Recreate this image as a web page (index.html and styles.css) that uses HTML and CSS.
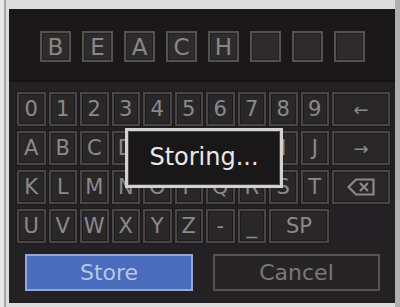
FILE: index.html
```html
<!DOCTYPE html>
<html>
<head>
<meta charset="utf-8">
<link rel="stylesheet" href="styles.css">
</head>
<body>
<div class="frame">
  <div class="panel">
    <div class="name-area">
      <div class="slot">B</div>
      <div class="slot">E</div>
      <div class="slot">A</div>
      <div class="slot">C</div>
      <div class="slot">H</div>
      <div class="slot"></div>
      <div class="slot"></div>
      <div class="slot"></div>
    </div>
    <div class="kb-area">
      <div class="keys">
        <div class="key">0</div><div class="key">1</div><div class="key">2</div><div class="key">3</div><div class="key">4</div><div class="key">5</div><div class="key">6</div><div class="key">7</div><div class="key">8</div><div class="key">9</div><div class="key sym">←</div>
        <div class="key">A</div><div class="key">B</div><div class="key">C</div><div class="key">D</div><div class="key">E</div><div class="key">F</div><div class="key">G</div><div class="key">H</div><div class="key">I</div><div class="key">J</div><div class="key sym">→</div>
        <div class="key">K</div><div class="key">L</div><div class="key">M</div><div class="key">N</div><div class="key">O</div><div class="key">P</div><div class="key">Q</div><div class="key">R</div><div class="key">S</div><div class="key">T</div>
        <div class="key sym"><svg width="28" height="18" viewBox="0 0 28 18"><path d="M9 1.5 H26.5 V16.5 H9 L1.5 9 Z" fill="none" stroke="#8d898b" stroke-width="2.2" stroke-linejoin="miter"/><path d="M13 5 L21 13 M21 5 L13 13" stroke="#8d898b" stroke-width="2.2"/></svg></div>
        <div class="key">U</div><div class="key">V</div><div class="key">W</div><div class="key">X</div><div class="key">Y</div><div class="key">Z</div><div class="key">-</div><div class="key">_</div><div class="key span2">SP</div>
      </div>
      <div class="actions">
        <div class="btn store">Store</div>
        <div class="btn cancel">Cancel</div>
      </div>
      <div class="popup">Storing...</div>
    </div>
  </div>
</div>
</body>
</html>
```

FILE: styles.css
```css
html, body {
  margin: 0;
  padding: 0;
}
body {
  width: 400px;
  height: 307px;
  background: #e6e6e6;
  overflow: hidden;
  font-family: "DejaVu Sans", sans-serif;
}
.frame {
  box-sizing: border-box;
  width: 400px;
  height: 307px;
  padding: 9px 5px 4px 9px;
  background: linear-gradient(to right, #e8e8e8 0, #e8e8e8 4px, #a6a6a6 4px, #a6a6a6 6px, #dcdcdc 6px, #dcdcdc 395px, #b0b0b0 395px);
}
.panel {
  width: 386px;
  height: 294px;
  display: flex;
  flex-direction: column;
  background: #1c191b;
  box-shadow: inset 0 2px 0 #3a3839;
}
.name-area {
  height: 73px;
  box-sizing: border-box;
  padding: 22px 0 0 31px;
  display: flex;
  gap: 11px;
  background: #1b181a;
  border-bottom: 2px solid #151214;
}
.slot {
  box-sizing: border-box;
  width: 31px;
  height: 31px;
  border: 2px solid #55514f;
  background: #2e2b2d;
  box-shadow: inset 0 0 0 1px #232022;
  color: #8a8688;
  font-size: 23px;
  display: flex;
  align-items: center;
  justify-content: center;
}
.kb-area {
  position: relative;
  flex: 1;
  background: #242124;
  padding: 10px 0 0 8px;
}
.keys {
  display: grid;
  grid-template-columns: repeat(10, 28.5px) 58px;
  grid-auto-rows: 34px;
  column-gap: 3px;
  row-gap: 5px;
}
.key {
  box-sizing: border-box;
  border: 2px solid #4a4648;
  background: #2a2729;
  box-shadow: inset 0 0 0 1px #1f1c1e, 0 0 0 1px #1d1a1c;
  color: #8d898b;
  font-size: 21px;
  display: flex;
  align-items: center;
  justify-content: center;
}
.key.sym {
  font-size: 18px;
}
.key.span2 {
  grid-column: span 2;
}
.actions {
  display: flex;
  gap: 20px;
  margin: 11px 0 0 8px;
}
.btn {
  box-sizing: border-box;
  height: 37px;
  display: flex;
  align-items: center;
  justify-content: center;
  font-size: 22px;
}
.store {
  width: 168px;
  background: #4b6cbd;
  border: 2px solid #93a6d6;
  color: #b4c8e6;
}
.cancel {
  width: 167px;
  background: #272426;
  border: 2px solid #575355;
  color: #7b7779;
}
.popup {
  position: absolute;
  left: 116px;
  top: 46px;
  width: 158px;
  height: 60px;
  box-sizing: border-box;
  border: 3px solid #d2d2d2;
  box-shadow: inset 0 0 0 1px #4a4749;
  background: #1a1719;
  color: #e8e8e8;
  font-size: 24px;
  display: flex;
  align-items: center;
  justify-content: center;
  padding-bottom: 2px;
}
```
